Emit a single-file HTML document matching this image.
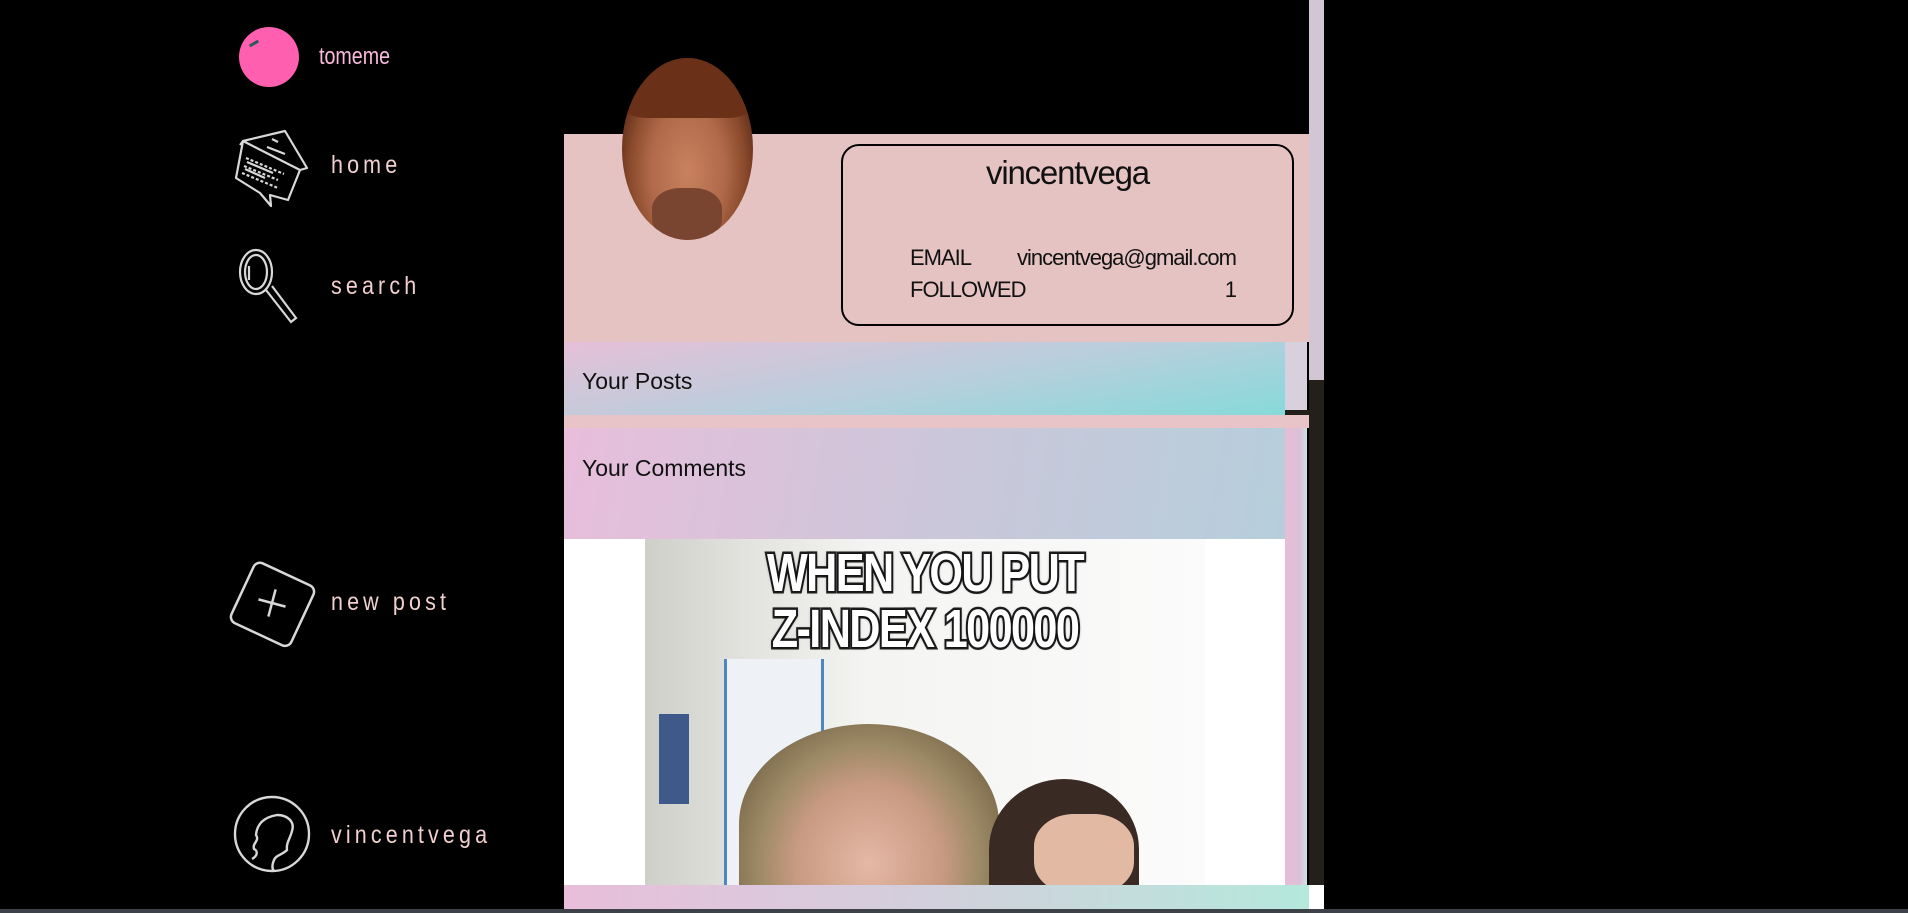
<!DOCTYPE html>
<html><head><meta charset="utf-8"><style>
*{margin:0;padding:0;box-sizing:border-box}
body{width:1908px;height:913px;background:#000;position:relative;overflow:hidden;font-family:"Liberation Sans",sans-serif}
.a{position:absolute}
.nav{position:absolute;color:#f1d0cf;font-family:"Liberation Sans",sans-serif;font-size:25px;letter-spacing:4.8px;line-height:1;transform:scaleX(.86);transform-origin:0 0;white-space:nowrap}
</style></head><body>
<div class="a" style="left:239px;top:27px;width:60px;height:60px;border-radius:50%;background:#ff5fae"></div>
<div class="a" style="left:249px;top:42px;width:10px;height:3px;background:#2b5a5a;transform:rotate(-30deg)"></div>
<div class="nav" style="left:319px;top:45px;font-size:24px;letter-spacing:0;color:#f7b9dc;transform:scaleX(.82)">tomeme</div>

<svg class="a" style="left:230px;top:125px" width="85" height="85" viewBox="0 0 85 85" fill="none" stroke="#d8d8d8" stroke-width="2.2" stroke-linejoin="round">
<path d="M13 16 L55 6 L77 43 L70 45 L58 75 L40 70 L41 81 L30 68 L6 53 Z"/><path d="M13 16 L70 45"/><path d="M13 16 L10 20"/>
<path d="M42 14 l6 3 M37 22 l18 7" /><path d="M16 33 l38 16 M14 41 l34 14 M12 48 l36 15" stroke-dasharray="3 2"/><path d="M17 37 l26 11 M15 44 l20 9"/></svg>
<div class="nav" style="left:331px;top:153px">home</div>

<svg class="a" style="left:236px;top:248px" width="66" height="80" viewBox="0 0 66 80" fill="none" stroke="#d8d8d8" stroke-width="2.2">
<ellipse cx="20" cy="24" rx="16" ry="22"/><ellipse cx="20" cy="24" rx="11" ry="17"/><path d="M13 18 v14"/>
<path d="M30 42 L55 74 L60 70 L36 38"/></svg>
<div class="nav" style="left:331px;top:274px">search</div>

<svg class="a" style="left:222px;top:553px" width="100" height="100" viewBox="0 0 100 100" fill="none" stroke="#d8d8d8" stroke-width="2.5">
<rect x="18" y="18" width="66" height="66" rx="7" transform="rotate(25 50 50)"/><path d="M50 36 L50 64 M36 50 L64 50" transform="rotate(15 50 50)"/></svg>
<div class="nav" style="left:331px;top:590px">new post</div>

<svg class="a" style="left:232px;top:795px" width="80" height="80" viewBox="0 0 80 80" fill="none" stroke="#d8d8d8" stroke-width="2.4">
<circle cx="40" cy="39" r="37"/><path d="M20 64 C27 60 25 55 22 54 C20 48 28 46 24 40 C25 28 33 22 45 20 C56 20 63 27 60 36 C58 44 54 48 55 55 C50 60 44 60 42 65 C40 70 40 74 42 76"/></svg>
<div class="nav" style="left:331px;top:823px">vincentvega</div>

<div class="a" style="left:564px;top:134px;width:745px;height:208px;background:#e6c3c3"></div>
<div class="a" style="left:1309px;top:0;width:15px;height:380px;background:#d2c5d4"></div>
<div class="a" style="left:1309px;top:380px;width:15px;height:505px;background:#23201a"></div>

<div class="a" style="left:622px;top:58px;width:131px;height:182px;border-radius:50%;background:radial-gradient(ellipse at 50% 62%,#c9825f 0%,#b06a4a 40%,#8a4a2c 62%,#5a2a18 80%);overflow:hidden">
<div class="a" style="left:0;top:0;width:131px;height:60px;background:#6a3018;border-radius:50% 50% 20% 20%"></div>
<div class="a" style="left:30px;top:130px;width:70px;height:52px;background:#7a4530;border-radius:40%"></div></div>

<div class="a" style="left:841px;top:144px;width:453px;height:182px;border:2.5px solid #000;border-radius:18px"></div>
<div class="a" style="left:841px;top:154px;width:453px;text-align:center;font-size:33px;color:#111;letter-spacing:-1.2px">vincentvega</div>
<div class="a" style="left:910px;top:242px;width:326px;font-size:22px;letter-spacing:-1px;color:#111;line-height:32px">
<div style="display:flex;justify-content:space-between"><span>EMAIL</span><span>vincentvega@gmail.com</span></div>
<div style="display:flex;justify-content:space-between"><span>FOLLOWED</span><span>1</span></div></div>

<div class="a" style="left:564px;top:342px;width:721px;height:73px;background:linear-gradient(170deg,#e6c0d8,#b6cfdc 55%,#86dada)"></div>
<div class="a" style="left:1285px;top:342px;width:22px;height:73px;background:#d8d0dc"></div>
<div class="a" style="left:1285px;top:410px;width:24px;height:6px;background:#23201a"></div>
<div class="a" style="left:582px;top:368px;font-size:23px;color:#111">Your Posts</div>
<div class="a" style="left:564px;top:415px;width:745px;height:13px;background:#e8c3c8"></div>
<div class="a" style="left:564px;top:428px;width:721px;height:111px;background:linear-gradient(100deg,#e8bedb,#c7c8da 60%,#b6cedb)"></div>
<div class="a" style="left:1285px;top:428px;width:22px;height:457px;background:linear-gradient(90deg,#e6bdd6,#dcc0d8 70%,#c9e4e0)"></div>
<div class="a" style="left:582px;top:455px;font-size:23px;color:#111">Your Comments</div>

<div class="a" style="left:564px;top:539px;width:721px;height:346px;background:#fff;overflow:hidden">
<div class="a" style="left:81px;top:0;width:560px;height:346px;background:linear-gradient(90deg,#cfcfca 0%,#e2e2de 18%,#f4f4f2 40%,#fbfbfb 100%)"></div>
<div class="a" style="left:160px;top:120px;width:100px;height:230px;background:#eef2f6;border-left:3px solid #4f86c2;border-right:3px solid #4f86c2"></div>
<div class="a" style="left:95px;top:175px;width:30px;height:90px;background:#3f5a8a"></div>
<div class="a" style="left:175px;top:185px;width:260px;height:200px;border-radius:50% 50% 10% 10%;background:radial-gradient(ellipse at 50% 70%,#e4b8a5 0%,#c89a82 40%,#9d8a66 60%,#7c6b4c 80%)"></div>
<div class="a" style="left:425px;top:240px;width:150px;height:140px;border-radius:50% 50% 10% 10%;background:#3a2a24"></div>
<div class="a" style="left:470px;top:275px;width:100px;height:80px;border-radius:40%;background:#e2b9a2"></div>
<div class="a" style="left:81px;top:6px;width:560px;text-align:center;font-weight:bold;font-size:54px;line-height:56px;color:#fff;letter-spacing:-2px;-webkit-text-stroke:5px #222;paint-order:stroke fill;text-shadow:0 0 4px #000;transform:scaleX(.8)">WHEN YOU PUT<br>Z-INDEX 100000</div>
</div>

<div class="a" style="left:564px;top:885px;width:745px;height:24px;background:linear-gradient(90deg,#e8bedb,#d2d0dc 50%,#b5e8dc)"></div>
<div class="a" style="left:1309px;top:885px;width:15px;height:24px;background:#fff"></div>
<div class="a" style="left:0;top:909px;width:1908px;height:4px;background:#3c4248"></div>
</body></html>
